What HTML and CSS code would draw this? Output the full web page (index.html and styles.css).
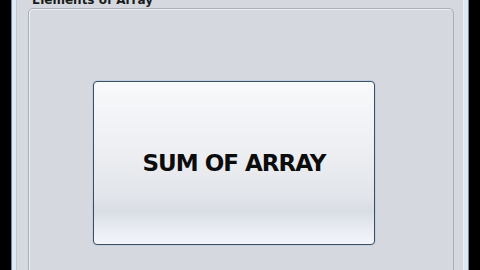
FILE: index.html
```html
<!DOCTYPE html>
<html lang="en">
<head>
    <meta charset="utf-8">
    <title>Elements of Array</title>
    <link rel="stylesheet" href="styles.css">
</head>
<body>

    <div class="frame">
        <div class="content">
            <div class="panelTitle">Elements of Array</div>
            <div class="panel">
                <button class="sumButton">SUM OF ARRAY</button>
            </div>
        </div>
    </div>

</body>
</html>
```

FILE: styles.css
```css
* {
    margin: 0;
    padding: 0;
    box-sizing: border-box;
}

body {
    background: #000;
    width: 480px;
    height: 270px;
    overflow: hidden;
    font-family: 'Liberation Sans', Arial, sans-serif;
}

.frame {
    margin: 0 11px;
    height: 270px;
    overflow: hidden;
    border-left: 1px solid #6f8cad;
    border-right: 1px solid #6f8cad;
    background: #dfe9f4;
    padding: 0 4px;
}

.content {
    height: 290px;
    background: #d5d8df;
    border-left: 1px solid #c3c7ce;
    border-right: 1px solid #eef0f3;
    padding: 0 9px 0 11px;
    margin-top: -8px;
}

.panelTitle {
    font-family: 'DejaVu Sans', sans-serif;
    font-size: 12px;
    font-weight: bold;
    color: #1a1a1a;
    padding: 2px 0 0 4px;
    height: 16px;
    line-height: 13px;
}

.panel {
    height: 290px;
    border: 1px solid #a9afb8;
    border-radius: 5px;
    box-shadow: inset 1px 1px 0 #eef0f4;
    padding: 72px 0 0 64px;
}

.sumButton {
    width: 282px;
    height: 164px;
    border: 1px solid #3f4d5d;
    border-radius: 4px;
    box-shadow: 0 0 0 1px #bfd0e4;
    background: linear-gradient(#f8f9fb 0%, #eceef1 45%, #e2e5ea 70%, #d9dde4 80%, #e8ebf2 90%, #f4f5fb 100%);
    font-family: 'DejaVu Sans', 'Liberation Sans', sans-serif;
    font-size: 23px;
    font-weight: bold;
    letter-spacing: -1px;
    color: #0c0c0c;
    cursor: pointer;
}
```
